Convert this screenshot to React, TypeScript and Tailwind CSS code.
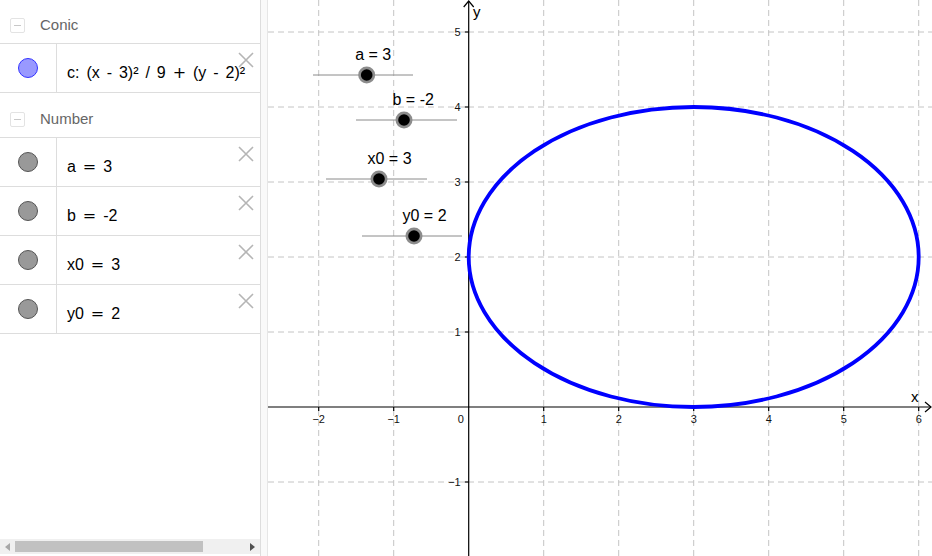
import React from 'react';

const UNIT = 75;
const OX = 468.7;
const OY = 407;

const px = (x: number) => OX + x * UNIT;
const py = (y: number) => OY - y * UNIT;

type Row = { label: string; kind: 'conic' | 'number' };

const numberRows: Row[] = [
  { label: 'a = 3', kind: 'number' },
  { label: 'b = -2', kind: 'number' },
  { label: 'x0 = 3', kind: 'number' },
  { label: 'y0 = 2', kind: 'number' },
];

const sliders = [
  { label: 'a = 3', x1: 313, x2: 413, y: 75, p: 366.7 },
  { label: 'b = -2', x1: 356, x2: 457, y: 120, p: 404 },
  { label: 'x0 = 3', x1: 326, x2: 427, y: 179, p: 379 },
  { label: 'y0 = 2', x1: 362, x2: 462, y: 236, p: 414 },
];

// "=" and "+" come out wider in the algebra view, so they get a wider face
const MathText = ({ text }: { text: string }) => (
  <span>
    {text.split(/([=+])/).map((part, i) =>
      part === '=' || part === '+' ? (
        <span key={i} className="font-['DejaVu_Sans',sans-serif]">{part}</span>
      ) : (
        <React.Fragment key={i}>{part}</React.Fragment>
      )
    )}
  </span>
);

const CloseIcon = () => (
  <svg width="18" height="18" viewBox="0 0 18 18" className="absolute right-[5px] top-[7px]">
    <path d="M2 2 L16 16 M16 2 L2 16" stroke="#b5b5b5" strokeWidth="1.6" fill="none" />
  </svg>
);

const GroupHeader = ({ title, height }: { title: string; height: string }) => (
  <div className={`flex items-center pt-[8px] border-b border-[#dddddd] ${height}`}>
    <div className="ml-[10px] w-[15px] h-[15px] rounded-[2px] border border-[#e3e3e3] flex items-center justify-center">
      <div className="w-[7px] h-[1px] bg-[#c8c8c8]" />
    </div>
    <span className="ml-[15px] text-[15px] text-[#666666]">{title}</span>
  </div>
);

const ItemRow = ({ row }: { row: Row }) => (
  <div className="relative flex h-[49px] border-b border-[#dddddd]">
    <div className="w-[57px] shrink-0 border-r border-[#dddddd] flex items-center justify-center">
      {row.kind === 'conic' ? (
        <div className="w-[20px] h-[20px] rounded-full bg-[#9999ff] border border-[#3333ff]" />
      ) : (
        <div className="w-[20px] h-[20px] rounded-full bg-[#999999] border border-[#555555]" />
      )}
    </div>
    <div className="flex-1 min-w-0 overflow-hidden whitespace-nowrap pl-[10px] pt-[9px] flex items-center text-[16px] text-black [word-spacing:2.5px]">
      <MathText text={row.label} />
    </div>
    <CloseIcon />
  </div>
);

const AlgebraPanel = () => (
  <div className="w-[261px] shrink-0 h-full flex flex-col border-r border-[#dddddd] bg-white">
    <GroupHeader title="Conic" height="h-[44px]" />
    <ItemRow row={{ label: 'c: (x - 3)² / 9 + (y - 2)²', kind: 'conic' }} />
    <GroupHeader title="Number" height="h-[45px]" />
    {numberRows.map((r) => (
      <ItemRow key={r.label} row={r} />
    ))}
    <div className="flex-1" />
    {/* horizontal scrollbar */}
    <div className="h-[15px] mb-[2px] bg-[#f0f0f0] flex items-center relative">
      <svg width="8" height="10" viewBox="0 0 8 10" className="ml-[4px]">
        <path d="M6 1 L1 5 L6 9 Z" fill="#a8a8a8" />
      </svg>
      <div className="ml-[3px] w-[188px] h-[11px] bg-[#c1c1c1]" />
      <div className="flex-1" />
      <svg width="8" height="10" viewBox="0 0 8 10" className="mr-[4px]">
        <path d="M2 1 L7 5 L2 9 Z" fill="#505050" />
      </svg>
    </div>
  </div>
);

const GraphicsView = () => {
  const xs = [-2, -1, 1, 2, 3, 4, 5, 6];
  const ys = [-1, 1, 2, 3, 4, 5];
  return (
    <div className="flex-1 h-full bg-white overflow-hidden">
      <svg width="664" height="556" viewBox="268 0 664 556" style={{ fontFamily: '"Liberation Sans", Arial, sans-serif' }}>
        {/* grid */}
        <g stroke="#c4c4c4" strokeWidth="1" strokeDasharray="6 4">
          {[-3, ...xs].map((x) => (
            <line key={`gx${x}`} x1={px(x)} y1={0} x2={px(x)} y2={556} />
          ))}
          {[-2, ...ys].map((y) => (
            <line key={`gy${y}`} x1={268} y1={py(y)} x2={932} y2={py(y)} />
          ))}
        </g>

        {/* axes */}
        <g stroke="#000" strokeWidth="1.2" fill="none">
          <line x1={268} y1={OY} x2={931} y2={OY} />
          <line x1={OX} y1={1} x2={OX} y2={556} />
          <path d={`M925 ${OY - 5} L931 ${OY} L925 ${OY + 5}`} />
          <path d={`M${OX - 5} 7 L${OX} 1 L${OX + 5} 7`} />
          {xs.map((x) => (
            <line key={`tx${x}`} x1={px(x)} y1={OY} x2={px(x)} y2={OY + 4} />
          ))}
          {ys.map((y) => (
            <line key={`ty${y}`} x1={OX - 4} y1={py(y)} x2={OX} y2={py(y)} />
          ))}
        </g>

        {/* axis labels */}
        <g fontSize="11" fill="#111">
          {xs.map((x) => (
            <text key={`lx${x}`} x={px(x)} y={OY + 16} textAnchor="middle">
              {x < 0 ? `\u2212${-x}` : x}
            </text>
          ))}
          <text x={OX - 8} y={OY + 16} textAnchor="middle">0</text>
          {ys.map((y) => (
            <text key={`ly${y}`} x={OX - 8} y={py(y) + 4} textAnchor="end">
              {y < 0 ? `\u2212${-y}` : y}
            </text>
          ))}
        </g>
        <text x={911} y={402} fontSize="15" fill="#000">x</text>
        <text x={473} y={17} fontSize="15" fill="#000">y</text>

        {/* conic */}
        <ellipse cx={px(3)} cy={py(2)} rx={3 * UNIT} ry={2 * UNIT} fill="none" stroke="#0000ff" strokeWidth="3.8" />

        {/* sliders */}
        {sliders.map((s) => (
          <g key={s.label}>
            <line x1={s.x1} y1={s.y} x2={s.x2} y2={s.y} stroke="#8a8a8a" strokeWidth="1" />
            <circle cx={s.p} cy={s.y} r={8.5} fill="#8c8c8c" />
            <circle cx={s.p} cy={s.y} r={5.8} fill="#000" />
            <text x={s.p - 11.5} y={s.y - 15} fontSize="16" fill="#000">{s.label}</text>
          </g>
        ))}
      </svg>
    </div>
  );
};

const App = () => {
  return (
    <div className="w-[932px] h-[556px] flex bg-white overflow-hidden" style={{ fontFamily: '"Liberation Sans", Arial, sans-serif' }}>
      <AlgebraPanel />
      <div className="w-[7px] shrink-0 h-full bg-[#f9f9f9] border-r border-[#e6e6e6]" />
      <GraphicsView />
    </div>
  );
};

export default App;
